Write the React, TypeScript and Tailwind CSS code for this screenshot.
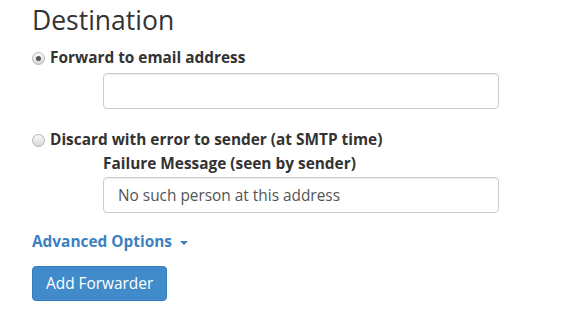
import React, { useState } from 'react';

const Radio: React.FC<{ checked: boolean; onChange: () => void }> = ({ checked, onChange }) => (
  <span
    onClick={onChange}
    className="flex h-[13px] w-[13px] shrink-0 items-center justify-center rounded-full border border-[#b5b5b5] bg-gradient-to-b from-[#fafafa] to-[#d8d8d8]"
  >
    {checked && <span className="h-[5px] w-[5px] rounded-full bg-[#555]" />}
  </span>
);

const App: React.FC = () => {
  const [mode, setMode] = useState<'forward' | 'discard'>('forward');

  return (
    <div className="min-h-screen bg-white pl-8 pt-[5px] font-['Open_Sans',sans-serif] text-[#333]">
      <h3 className="text-[26.5px] leading-[30px] font-normal text-[#333]">Destination</h3>

      {/* Forward option */}
      <label className="mt-[13px] flex items-center gap-[5px] text-[15.4px] font-bold leading-5">
        <Radio checked={mode === 'forward'} onChange={() => setMode('forward')} />
        Forward to email address
      </label>
      <div className="mt-[5px] pl-[71px]">
        <input
          type="text"
          className="h-[36px] w-[396px] rounded-[4px] border border-[#ccc] px-3 text-[15.4px] shadow-[inset_0_1px_1px_rgba(0,0,0,0.075)] outline-none"
        />
      </div>

      {/* Discard option */}
      <label className="mt-[21px] flex items-center gap-[5px] text-[15.4px] font-bold leading-5">
        <Radio checked={mode === 'discard'} onChange={() => setMode('discard')} />
        Discard with error to sender (at SMTP time)
      </label>
      <div className="pl-[71px]">
        <div className="mt-[4px] text-[15.4px] font-bold leading-5">Failure Message (seen by sender)</div>
        <input
          type="text"
          defaultValue="No such person at this address"
          className="mt-[3px] h-[36px] w-[396px] rounded-[4px] border border-[#ccc] px-[14px] text-[15.4px] text-[#555] shadow-[inset_0_1px_1px_rgba(0,0,0,0.075)] outline-none"
        />
      </div>

      <button className="mt-[19px] flex items-center gap-[8px] text-[15.4px] font-bold leading-5 text-[#3d80c0]">
        Advanced Options
        <span className="mt-[2px] h-0 w-0 border-x-[4px] border-t-[4px] border-x-transparent border-t-[#3d80c0]" />
      </button>

      <button className="mt-[14px] h-[35px] rounded-[4px] border border-[#357ebd] bg-[#428bca] px-[13px] text-[15.4px] text-white">
        Add Forwarder
      </button>
    </div>
  );
};

export default App;
